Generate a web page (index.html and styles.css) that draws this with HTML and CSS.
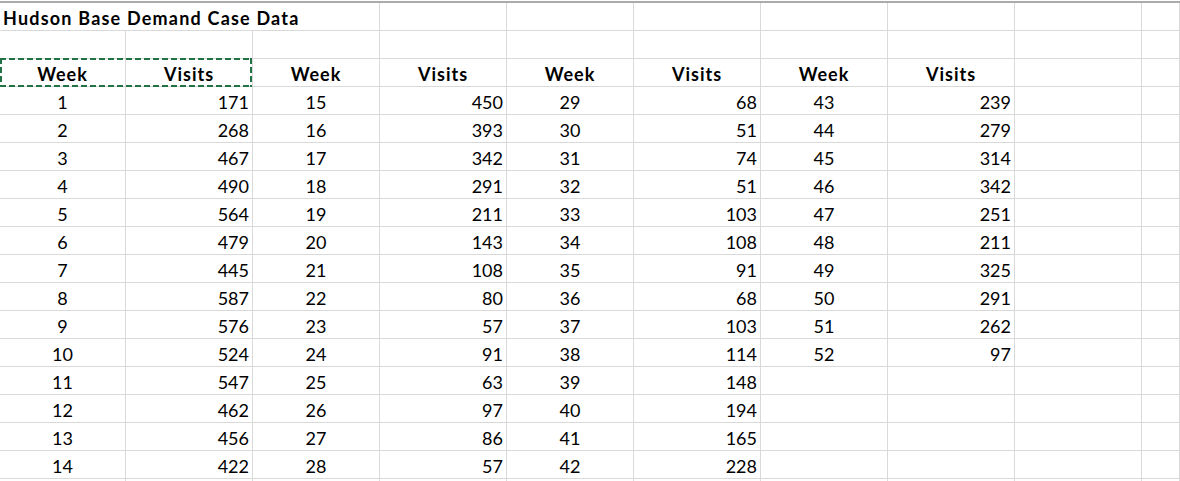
FILE: index.html
```html
<!DOCTYPE html>
<html>
<head>
<meta charset="utf-8">
<link rel="stylesheet" href="styles.css">
</head>
<body>
<div class="topbar"></div>
<div class="sheet">
  <div class="row">
    <div class="c title">Hudson Base Demand Case Data</div>
    <div class="c"></div><div class="c"></div><div class="c"></div><div class="c"></div><div class="c"></div><div class="c"></div><div class="c"></div>
  </div>
  <div class="row">
    <div class="c"></div><div class="c"></div><div class="c"></div><div class="c"></div><div class="c"></div><div class="c"></div><div class="c"></div><div class="c"></div><div class="c"></div><div class="c"></div>
  </div>
  <div class="row head">
    <div class="marquee"></div>
    <div class="c h">Week</div><div class="c h">Visits</div><div class="c h">Week</div><div class="c h">Visits</div><div class="c h">Week</div><div class="c h">Visits</div><div class="c h">Week</div><div class="c h">Visits</div><div class="c"></div><div class="c"></div>
  </div>
  <div class="row"><div class="c w">1</div><div class="c v">171</div><div class="c w">15</div><div class="c v">450</div><div class="c w">29</div><div class="c v">68</div><div class="c w">43</div><div class="c v">239</div><div class="c"></div><div class="c"></div></div>
  <div class="row"><div class="c w">2</div><div class="c v">268</div><div class="c w">16</div><div class="c v">393</div><div class="c w">30</div><div class="c v">51</div><div class="c w">44</div><div class="c v">279</div><div class="c"></div><div class="c"></div></div>
  <div class="row"><div class="c w">3</div><div class="c v">467</div><div class="c w">17</div><div class="c v">342</div><div class="c w">31</div><div class="c v">74</div><div class="c w">45</div><div class="c v">314</div><div class="c"></div><div class="c"></div></div>
  <div class="row"><div class="c w">4</div><div class="c v">490</div><div class="c w">18</div><div class="c v">291</div><div class="c w">32</div><div class="c v">51</div><div class="c w">46</div><div class="c v">342</div><div class="c"></div><div class="c"></div></div>
  <div class="row"><div class="c w">5</div><div class="c v">564</div><div class="c w">19</div><div class="c v">211</div><div class="c w">33</div><div class="c v">103</div><div class="c w">47</div><div class="c v">251</div><div class="c"></div><div class="c"></div></div>
  <div class="row"><div class="c w">6</div><div class="c v">479</div><div class="c w">20</div><div class="c v">143</div><div class="c w">34</div><div class="c v">108</div><div class="c w">48</div><div class="c v">211</div><div class="c"></div><div class="c"></div></div>
  <div class="row"><div class="c w">7</div><div class="c v">445</div><div class="c w">21</div><div class="c v">108</div><div class="c w">35</div><div class="c v">91</div><div class="c w">49</div><div class="c v">325</div><div class="c"></div><div class="c"></div></div>
  <div class="row"><div class="c w">8</div><div class="c v">587</div><div class="c w">22</div><div class="c v">80</div><div class="c w">36</div><div class="c v">68</div><div class="c w">50</div><div class="c v">291</div><div class="c"></div><div class="c"></div></div>
  <div class="row"><div class="c w">9</div><div class="c v">576</div><div class="c w">23</div><div class="c v">57</div><div class="c w">37</div><div class="c v">103</div><div class="c w">51</div><div class="c v">262</div><div class="c"></div><div class="c"></div></div>
  <div class="row"><div class="c w">10</div><div class="c v">524</div><div class="c w">24</div><div class="c v">91</div><div class="c w">38</div><div class="c v">114</div><div class="c w">52</div><div class="c v">97</div><div class="c"></div><div class="c"></div></div>
  <div class="row"><div class="c w">11</div><div class="c v">547</div><div class="c w">25</div><div class="c v">63</div><div class="c w">39</div><div class="c v">148</div><div class="c"></div><div class="c"></div><div class="c"></div><div class="c"></div></div>
  <div class="row"><div class="c w">12</div><div class="c v">462</div><div class="c w">26</div><div class="c v">97</div><div class="c w">40</div><div class="c v">194</div><div class="c"></div><div class="c"></div><div class="c"></div><div class="c"></div></div>
  <div class="row"><div class="c w">13</div><div class="c v">456</div><div class="c w">27</div><div class="c v">86</div><div class="c w">41</div><div class="c v">165</div><div class="c"></div><div class="c"></div><div class="c"></div><div class="c"></div></div>
  <div class="row"><div class="c w">14</div><div class="c v">422</div><div class="c w">28</div><div class="c v">57</div><div class="c w">42</div><div class="c v">228</div><div class="c"></div><div class="c"></div><div class="c"></div><div class="c"></div></div>
  <div class="row tail"><div class="c"></div><div class="c"></div><div class="c"></div><div class="c"></div><div class="c"></div><div class="c"></div><div class="c"></div><div class="c"></div><div class="c"></div><div class="c"></div></div>
</div>
</body>
</html>
```

FILE: styles.css
```css
html, body {
  margin: 0;
  padding: 0;
  background: #ffffff;
  overflow: hidden;
}
body {
  font-family: "Lato", "Open Sans", sans-serif;
  font-size: 18px;
  color: #000000;
}
.topbar {
  margin-top: 1px;
  height: 2px;
  background: #ababab;
}
.sheet {
  display: flex;
  flex-direction: column;
}
.row {
  display: grid;
  grid-template-columns: 126px repeat(8, 127px) 1fr;
  height: 28px;
}
.head {
  position: relative;
}
.c {
  box-sizing: border-box;
  height: 28px;
  border-right: 1px solid #d9d9d9;
  border-bottom: 1px solid #d9d9d9;
  padding: 3px 3px 0 3px;
  line-height: 24px;
  white-space: nowrap;
  overflow: visible;
}
.tail {
  height: 2px;
}
.tail .c {
  height: 2px;
  border-bottom: none;
  padding: 0;
}
.title {
  grid-column: span 3;
  font-weight: 700;
  letter-spacing: 1.2px;
}
.h {
  font-weight: 700;
  text-align: center;
  letter-spacing: 1px;
}
.w {
  text-align: center;
}
.v {
  text-align: right;
}
.marquee {
  position: absolute;
  left: 0;
  top: -1px;
  width: 252px;
  height: 29px;
  box-sizing: border-box;
  pointer-events: none;
  background:
    repeating-linear-gradient(90deg, #217346 0 6px, transparent 6px 9px) left top / 100% 2px no-repeat,
    repeating-linear-gradient(90deg, #217346 0 6px, transparent 6px 9px) left bottom / 100% 2px no-repeat,
    repeating-linear-gradient(180deg, #217346 0 6px, transparent 6px 9px) left top / 2px 100% no-repeat,
    repeating-linear-gradient(180deg, #217346 0 6px, transparent 6px 9px) right top / 2px 100% no-repeat;
}
```
